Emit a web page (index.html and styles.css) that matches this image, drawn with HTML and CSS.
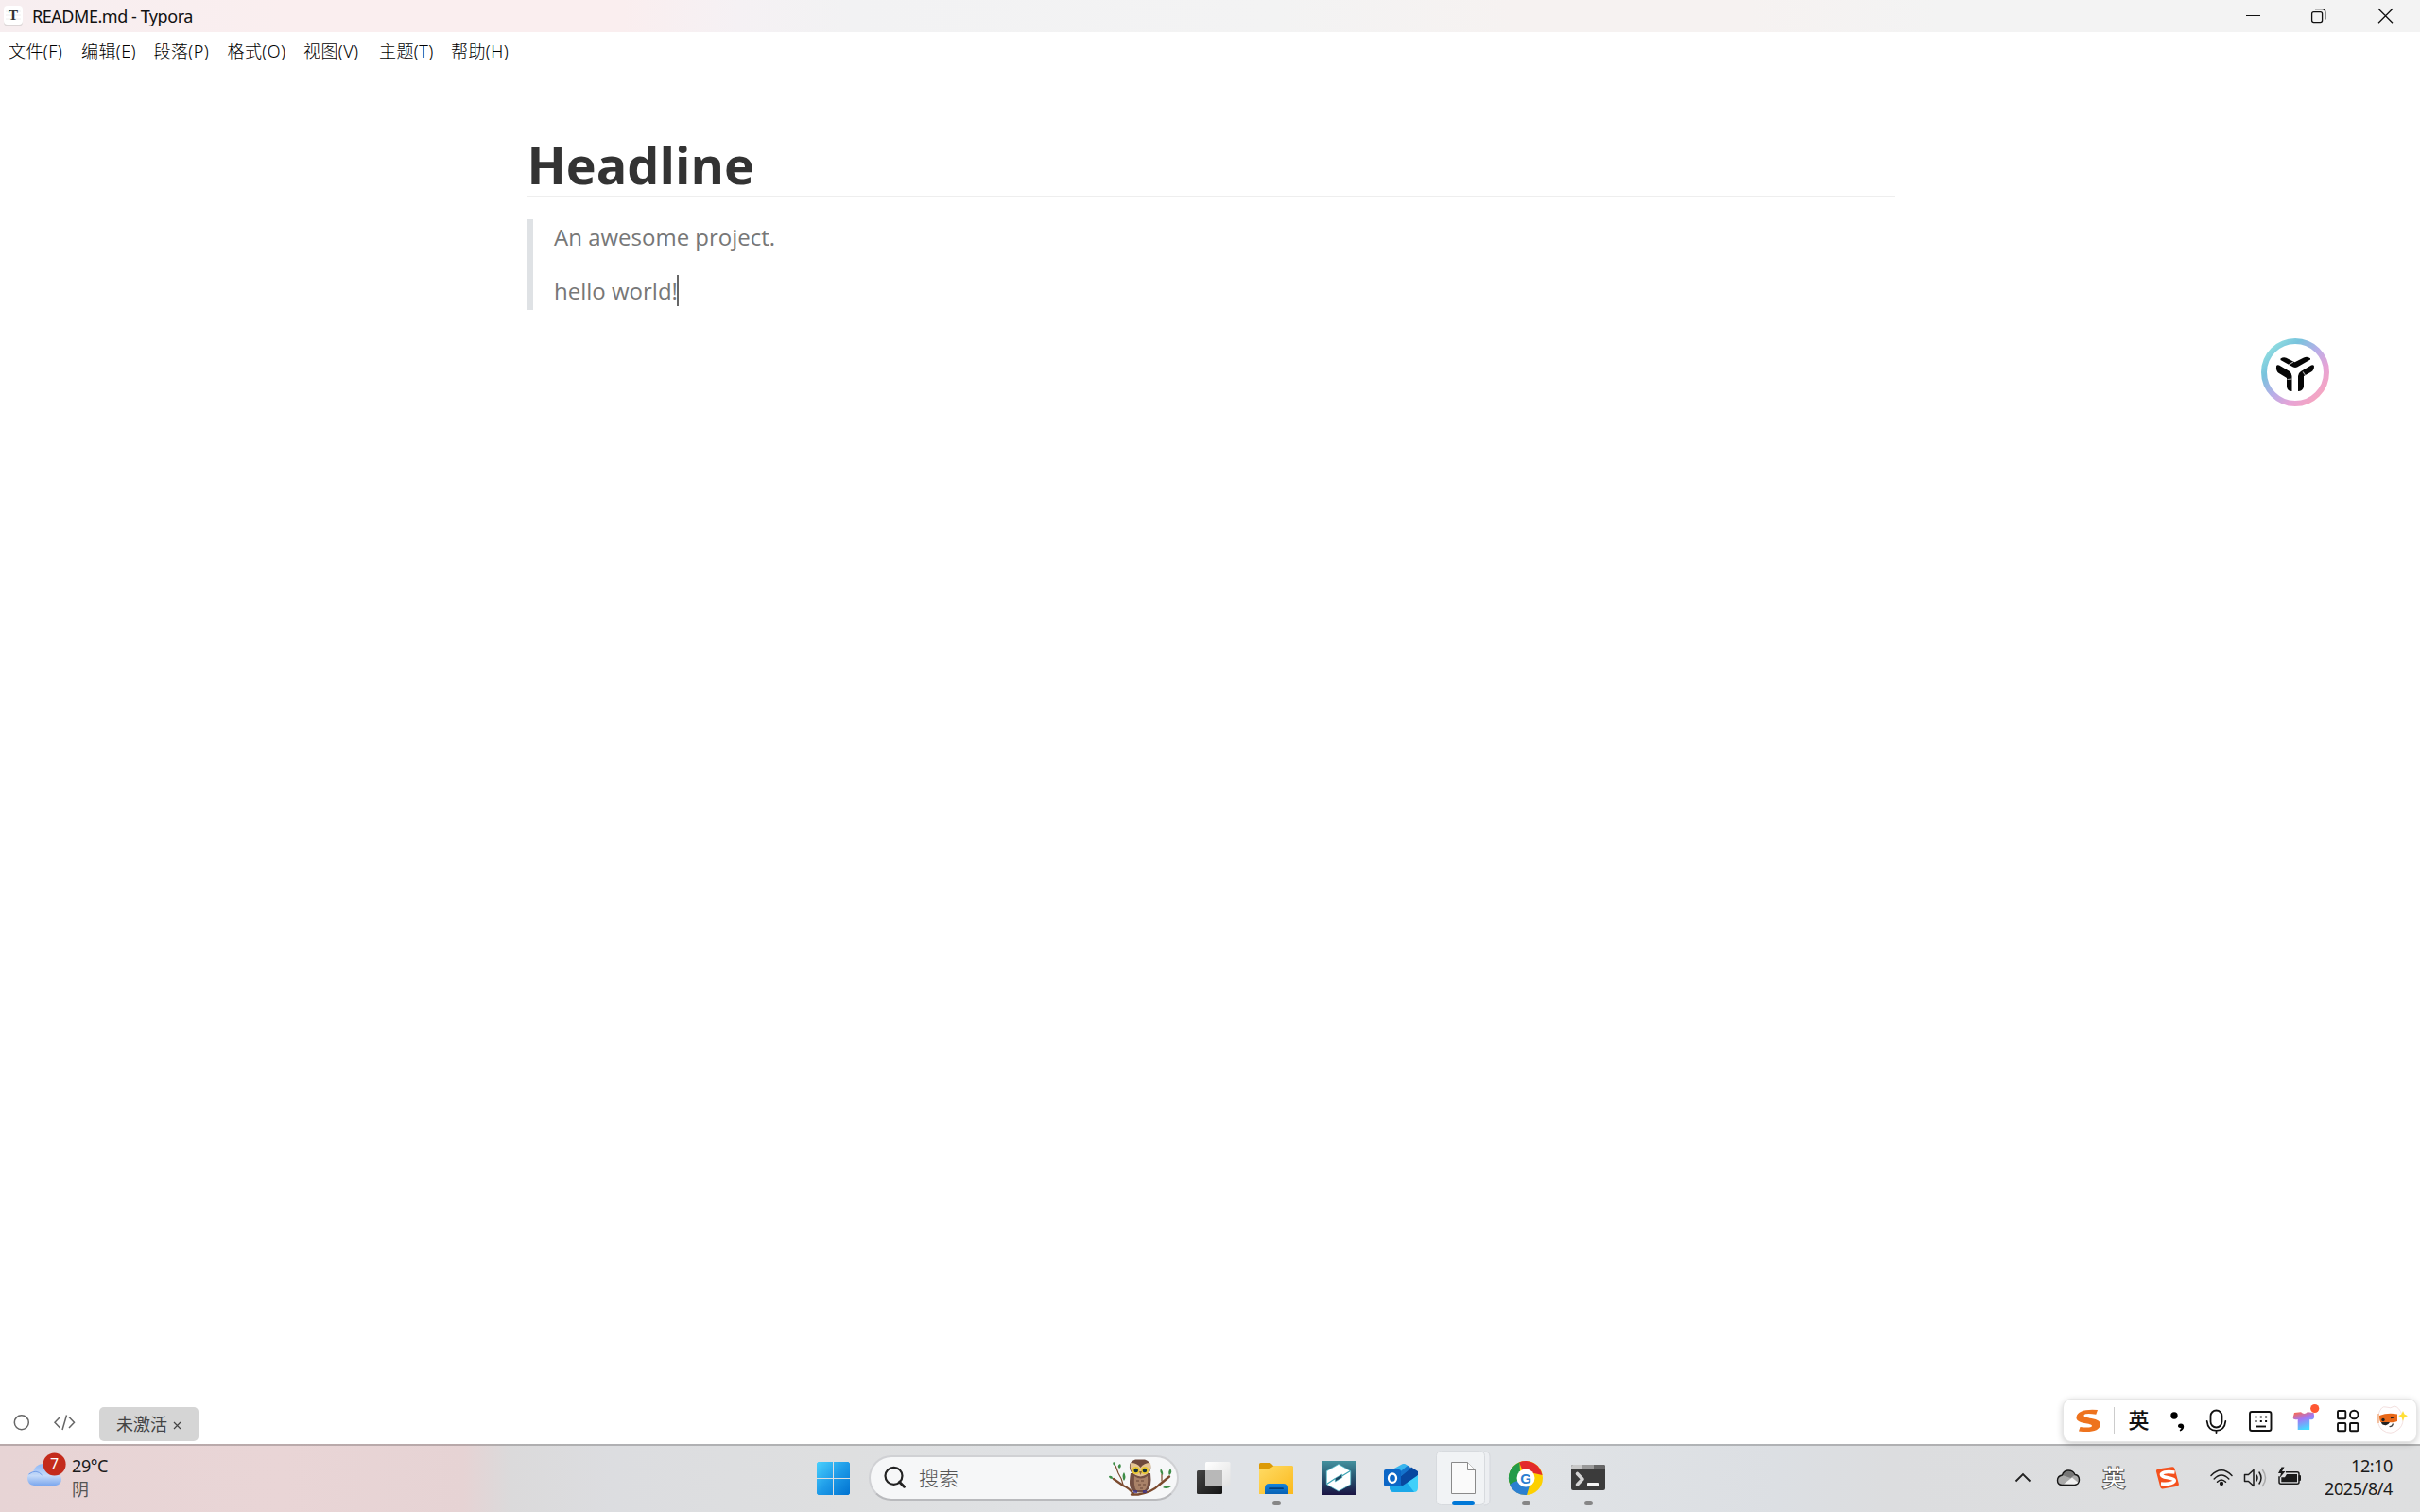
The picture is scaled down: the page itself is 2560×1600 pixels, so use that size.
FILE: index.html
```html
<!DOCTYPE html>
<html lang="zh-CN">
<head>
<meta charset="utf-8">
<title>README.md - Typora</title>
<link rel="stylesheet" href="styles.css">
</head>
<body>
<div class="screen">
  <header class="titlebar">
    <svg class="app-icon" width="22" height="24" viewBox="0 0 22 24">
      <rect x="1" y="2.5" width="20" height="20" rx="4" fill="#dcd6d7"/>
      <rect x="1" y="1" width="20" height="20" rx="4" fill="#fff"/>
      <path d="M3 7h16M3 11h16M3 15h16" stroke="#eee" stroke-width="1"/>
      <text x="11" y="16" text-anchor="middle" class="app-letter">T</text>
    </svg>
    <span class="title">README.md - Typora</span>
    <div class="window-buttons">
      <svg width="70" height="34" viewBox="0 0 70 34"><path d="M28 16.5h15" stroke="#111" fill="none"/></svg>
      <svg width="70" height="34" viewBox="0 0 70 34"><g fill="none" stroke="#111" stroke-width="1.3"><rect x="27.6" y="12.6" width="11" height="11" rx="2"/><path d="M31 9.7h7.500q3.300 0 3.300 3.300v7.500"/></g></svg>
      <svg width="72" height="34" viewBox="0 0 72 34"><path d="M28 9.200l15 15M43 9.200l-15 15" stroke="#111" stroke-width="1.300"/></svg>
    </div>
  </header>

  <nav class="menu">
    <span>文件(F)</span><span>编辑(E)</span><span>段落(P)</span><span>格式(O)</span><span>视图(V)</span><span>主题(T)</span><span>帮助(H)</span>
  </nav>

  <main class="editor">
    <article class="document">
      <h1>Headline</h1>
      <blockquote>
        <p>An awesome project.</p>
        <p>hello world!<span class="caret"></span></p>
      </blockquote>
    </article>
  </main>

  <footer class="status">
    <svg width="105" height="44" viewBox="0 1484 105 44" fill="none" stroke="#666" stroke-width="1.500">
      <circle cx="22.800" cy="1505.200" r="7.500"/>
      <path d="M63.500 1499.500l-5.500 5.700 5.500 5.700M73 1499.500l5.500 5.700-5.500 5.700M70.500 1497.500l-4.500 15.500"/>
    </svg>
    <div class="license">未激活<svg width="9" height="9" viewBox="0 0 9 9"><path d="M1 1l7 7M8 1l-7 7" stroke="#444" stroke-width="1.200"/></svg></div>
  </footer>

  <footer class="taskbar">
    <section class="weather">
      <svg width="48" height="70" viewBox="24 1530 48 70">
        <defs>
          <linearGradient id="cloud" x1="0" y1="0" x2="0" y2="1"><stop offset="0" stop-color="#8db7f6"/><stop offset=".55" stop-color="#c5daf8"/><stop offset="1" stop-color="#7ba7ee"/></linearGradient>
        </defs>
        <path d="M36 1572q-7-1-7-8 0-6 6-6.500 2-8 10.500-8.500 9 0 11 9 8 0 8.500 7 0 6-6 7z" fill="url(#cloud)"/>
        <path d="M30.500 1560q8-6 14 1" fill="none" stroke="#769fe7" stroke-width="1"/>
        <circle cx="57.600" cy="1549.500" r="12" fill="#c42b1c"/>
        <text x="57.600" y="1555.300" text-anchor="middle" class="badge">7</text>
      </svg>
      <div class="weather-text"><span>29°C</span><span class="sky">阴</span></div>
    </section>

    <section class="apps">
      <svg width="66" height="70" viewBox="848 1530 66 70">
        <defs><linearGradient id="win" x1="0" y1="0" x2="1" y2="1"><stop offset="0" stop-color="#49d0fd"/><stop offset=".5" stop-color="#1e9be8"/><stop offset="1" stop-color="#0072d0"/></linearGradient></defs>
        <path d="M865.500 1547H881v17h-17v-15.500zM882 1547h15.500l1.500 1.500V1564h-17zM864 1565h17v17h-15.500l-1.500-1.500zM882 1565h17v15.500l-1.500 1.500H882z" fill="url(#win)"/>
      </svg>

      <div class="search">
        <svg width="24" height="26" viewBox="0 0 24 26"><circle cx="10.500" cy="10.800" r="9" fill="none" stroke="#222" stroke-width="2.200"/><path d="M16.500 17.200l5 5" stroke="#222" stroke-width="3" stroke-linecap="round"/></svg>
        <span>搜索</span>
        <svg class="owl" width="68" height="40" viewBox="1171 1545 68 40">
          <g fill="none" stroke="#7b4a2e" stroke-linecap="round">
            <path d="M1195 1582.500h7q14-2 22-10l11-9" stroke-width="2.400"/>
            <path d="M1197 1582q-4-6-11-9l-10-7" stroke-width="2.400"/>
            <path d="M1186 1572q-1-6-5-12l-3-8M1227 1568v-7" stroke-width="1.200"/>
          </g>
          <g fill="#3d8c46">
            <path d="M1177 1552q-3-2-1-4 3 1 1 4zM1182 1555q-3-3 1-5 2 3-1 5zM1187 1568q-3-5 0-9 3 5 0 9zM1175 1566q-4 0-4-3 4-1 4 3zM1228 1562q-4-3-2-7 3 4 2 7zM1235 1562q-2-3 1-7 3 4-1 7zM1228 1575q4-3.500 9-1-5 3.500-9 1z"/>
          </g>
          <path d="M1194 1560q-3 17 3 19 7 3 14 0 6-4 4-19z" fill="#745043"/>
          <path d="M1198 1563q7 5 14 0 1 12-3 15h-9q-3-4-2-15z" fill="#a98268"/>
          <path d="M1200 1568h3m2 0h3m-6 4h3m2 0h3m-6 4h3" stroke="#684638" stroke-width="1"/>
          <path d="M1193 1551q1-4 6-5.500h10q5 1.500 6 5.500 2 11-10.500 12.500Q1192 1562 1193 1551z" fill="#6f493c"/>
          <path d="M1194 1549q7 0 10.500 5 3.500-5 10.500-5 1 6-1 9-3 4.500-9.500 5.500-6.500-1-9.500-5.500-2-3-1-9z" fill="#e3c394"/>
          <g fill="#e9c832"><circle cx="1199.500" cy="1557" r="4"/><circle cx="1209" cy="1557" r="4"/></g>
          <g fill="#15313c"><circle cx="1199.700" cy="1557" r="2.300"/><circle cx="1208.900" cy="1557" r="2.300"/></g>
          <path d="M1203 1558h3l-1.500 4z" fill="#8b6735"/>
          <path d="M1198 1578v3m2-3v3m8-3v3m2-3v3" stroke="#3b3188" stroke-width="1.500"/>
        </svg>
      </div>

      <svg width="66" height="70" viewBox="1251 1530 66 70">
        <defs><linearGradient id="tv" x1="0" y1="0" x2="1" y2="1"><stop offset="0" stop-color="#444"/><stop offset="1" stop-color="#151515"/></linearGradient><linearGradient id="tw" x1="0" y1="0" x2="1" y2="1"><stop offset="0" stop-color="#fff"/><stop offset="1" stop-color="#e2e2e2"/></linearGradient></defs>
        <rect x="1266" y="1556" width="27" height="25" rx="1.500" fill="url(#tv)"/>
        <rect x="1275" y="1547" width="26.500" height="25" rx="1.500" fill="url(#tw)"/>
        <path d="M1275 1556h18v16h-18z" fill="#b8b8b8"/>
      </svg>

      <svg width="66" height="70" viewBox="1317 1530 66 70">
        <defs><linearGradient id="fold" x1="0" y1="0" x2="1" y2="1"><stop offset="0" stop-color="#ffdc66"/><stop offset="1" stop-color="#fbb91c"/></linearGradient><linearGradient id="blue" x1="0" y1="0" x2="0" y2="1"><stop offset="0" stop-color="#1383dc"/><stop offset="1" stop-color="#0862b5"/></linearGradient></defs>
        <path d="M1332 1549.500q0-1.500 1.500-1.500h9.500q1 0 2 1l2.500 2.500h19q1.500 0 1.500 1.500v6h-36z" fill="#dc9a06"/>
        <path d="M1332 1554h10q2 0 4-1.700 1-1.300 3-1.300h17.500q1.500 0 1.500 1.500V1581h-36z" fill="url(#fold)"/>
        <path d="M1338 1581v-6.500q0-4.500 4.500-4.500h15q4.500 0 4.500 4.500v6.500z" fill="url(#blue)"/>
        <path d="M1343 1575.200h14" stroke="#063f78" stroke-width="1.800" stroke-linecap="round"/>
        <rect x="1346" y="1588" width="9" height="5" rx="2.500" fill="#868686"/>
      </svg>

      <svg width="66" height="70" viewBox="1383 1530 66 70">
        <defs><linearGradient id="hex" x1="0" y1="0" x2="0" y2="1"><stop offset="0" stop-color="#43919e"/><stop offset=".5" stop-color="#27546f"/><stop offset="1" stop-color="#1b1444"/></linearGradient></defs>
        <path d="M1398 1546h36v36h-36z" fill="url(#hex)"/>
        <path d="M1416 1549.500l12.700 7.200v14l-12.700 7.300-12.700-7.300v-14z" fill="#fff" stroke="#55c5d2" stroke-width=".700"/>
        <path d="M1403.500 1570.500l9-6M1419.500 1562l9-5.500" stroke="#3aa3b4" stroke-width="1.200"/>
        <path d="M1412.300 1564.300l7.400-4.300v3.700l-7.400 4.300z" fill="#1f4760" stroke="#55c5d2" stroke-width=".600"/>
      </svg>

      <svg width="66" height="70" viewBox="1449 1530 66 70">
        <path d="M1470 1559.500l13-9.500q2-1.500 4 0l12 8.500V1574h-29z" fill="#168ddd"/>
        <path d="M1472 1555.500l11-6q2-1 4 0l4 2.500-14 12h-5z" fill="#38b5ee"/>
        <path d="M1500 1561v13.500q0 4.500-4.500 4.500H1475q-5 0-5-5l18-5z" fill="#3ed0fa"/>
        <path d="M1470 1570l17-3 9 12h-21q-5 0-5-5z" fill="#1ba8e9"/>
        <path d="M1482 1562l11-9.500 7 4.500v4l-16 11-8-1z" fill="#0848a0"/>
        <path d="M1478 1560l11-9 4 2.500-14 11z" fill="#1473cc"/>
        <rect x="1464" y="1555" width="18" height="18" rx="2" fill="#0c66c6"/>
        <ellipse cx="1473" cy="1564.200" rx="4" ry="4.700" fill="none" stroke="#fff" stroke-width="2.300"/>
      </svg>

      <svg width="66" height="70" viewBox="1515 1530 66 70">
        <path d="M1570 1536q6 0 6 5v46q0 6-6 6" fill="#eceef1" stroke="#d4d7dc"/>
        <rect x="1519.500" y="1535.500" width="51" height="57" rx="5" fill="#f1f3f5" stroke="#d7dade"/>
        <path d="M1535.500 1547.500h17l8 8v25h-25z" fill="#fafafa" stroke="#8a8a8a"/>
        <path d="M1552.500 1547.500v8h8" fill="#fff" stroke="#8a8a8a"/>
        <rect x="1536" y="1588" width="24" height="5" rx="2.500" fill="#0078d7"/>
      </svg>

      <svg width="66" height="70" viewBox="1581 1530 66 70">
        <circle cx="1614" cy="1564" r="18" fill="#fdd000"/>
        <path d="M1614 1564L1607 1547.400A18 18 0 0 1 1631.500 1561L1614 1557z" fill="#e32b2b"/>
        <path d="M1614 1564L1597.500 1571.500A18 18 0 0 1 1607.500 1547.200L1608 1558z" fill="#249b49"/>
        <path d="M1606 1566l12 6-3 10a18 18 0 0 1-18-11z" fill="#2b80d1"/>
        <path d="M1606 1567l-9.500 1.500A18 18 0 0 1 1599 1554z" fill="#249b49"/>
        <circle cx="1614" cy="1564" r="9.500" fill="#fff"/>
        <text x="1614" y="1569.500" text-anchor="middle" class="chrome-g">G</text>
        <rect x="1610" y="1588" width="9" height="5" rx="2.500" fill="#868686"/>
      </svg>

      <svg width="66" height="70" viewBox="1647 1530 66 70">
        <rect x="1662" y="1550" width="36" height="27" rx="2" fill="#3b3b3b"/>
        <path d="M1664 1550h10v5h-12v-3q0-2 2-2z" fill="#c8c8c8"/><path d="M1674 1550h12v5h-12z" fill="#999"/><path d="M1686 1550h10q2 0 2 2v3h-12z" fill="#676767"/>
        <path d="M1668.500 1559.500l5.500 5.800-5.500 5.800" fill="none" stroke="#d4d4d4" stroke-width="3.600" stroke-linecap="round" stroke-linejoin="round"/>
        <rect x="1679" y="1569" width="12" height="4" rx=".800" fill="#f4f4f4"/>
        <rect x="1676" y="1588" width="9" height="5" rx="2.500" fill="#868686"/>
      </svg>
    </section>

    <section class="tray">
      <svg width="40" height="70" viewBox="2120 1530 40 70"><path d="M2132.500 1567.500l7.500-7.500 7.500 7.500" fill="none" stroke="#222" stroke-width="1.800"/></svg>
      <svg width="52" height="70" viewBox="2160 1530 52 70">
        <path d="M2181 1571.500q-4.500-.500-4.500-5t5-5.500q1.500-5 6.500-5 5 0 7 4.500 4.500.500 4.500 5.500 0 5-5 5.500z" fill="#aaa"/>
        <path d="M2183 1570.500l9-7 6.500 5.500q-1.500 2-4 2z" fill="#f1f1f1"/>
        <path d="M2181.500 1561q2-4.500 6.500-4.500 4 0 6.500 4.500l-4 3z" fill="#777"/>
        <path d="M2181 1571.500q-4.500-.500-4.500-5t5-5.500q1.500-5 6.500-5 5 0 7 4.500 4.500.500 4.500 5.500 0 5-5 5.500z" fill="none" stroke="#161616" stroke-width="1.400"/>
      </svg>
      <svg width="48" height="70" viewBox="2212 1530 48 70"><text x="2236" y="1573" text-anchor="middle" class="ime-outline">英</text></svg>
      <svg width="66" height="70" viewBox="2260 1530 66 70">
        <path d="M2283 1554.500l15-2.300q2-.200 2.500 1.800l4.300 16q.500 2-1.500 2.700l-15.500 2.800q-2 .300-2.500-1.700l-4.300-16.500q-.500-2 2-2.800z" fill="#f4511d"/>
        <path d="M2300.500 1558q-12-1.500-14 2-.500 2.500 6 3.500 9 1.500 7.500 4-3 3.500-14 2.500" fill="none" stroke="#fff" stroke-width="3.600"/>
      </svg>
      <svg width="42" height="70" viewBox="2326 1530 42 70" fill="none" stroke="#1b1b1b" stroke-width="1.500" stroke-linecap="round">
        <path d="M2339 1561.500q11-11.500 22 0M2342.200 1565q7.800-8 15.600 0M2345.500 1568.200q4.500-4.500 9 0"/><circle cx="2350" cy="1570" r="1.400" fill="#1b1b1b"/>
      </svg>
      <svg width="36" height="70" viewBox="2368 1530 36 70" fill="none" stroke="#1b1b1b" stroke-width="1.500" stroke-linecap="round" stroke-linejoin="round">
        <path d="M2374.500 1560.500h4l5.500-5v17l-5.500-5h-4zM2387 1561q2 3 0 6M2390 1558q4 6 0 12"/><path d="M2393.500 1555.500q6 8.500 0 17" stroke="#aaa"/>
      </svg>
      <svg width="42" height="70" viewBox="2404 1530 42 70">
        <path d="M2418 1557.700h12q2 0 2 2v8.600q0 2-2 2h-17q-2 0-2-2v-6" fill="none" stroke="#1b1b1b" stroke-width="1.500"/>
        <path d="M2419 1560h11v8.300h-16.700v-5h3.700z" fill="#1b1b1b"/><rect x="2431.500" y="1561" width="2.500" height="6" rx="1" fill="#1b1b1b"/>
        <path d="M2413.500 1552.500l-3.500 6.500h3l-1.500 5 6-7h-3.500l2.500-4.500z" fill="#1b1b1b"/>
      </svg>
      <div class="clock"><span>12:10</span><span>2025/8/4</span></div>
    </section>
  </footer>

  <aside class="assistant">
    <svg width="72" height="72" viewBox="0 0 72 72">
      <defs><linearGradient id="ring" x1=".1" y1=".1" x2=".9" y2=".9"><stop offset="0" stop-color="#8fdde0"/><stop offset=".22" stop-color="#78c3dd"/><stop offset=".5" stop-color="#b9aee8"/><stop offset=".75" stop-color="#e6a3d6"/><stop offset="1" stop-color="#f6a6c0"/></linearGradient></defs>
      <circle cx="36" cy="36" r="33" fill="#fff" stroke="url(#ring)" stroke-width="6"/>
      <path d="M20.500 21.500q3-2 6-.8l9 4.600 9.500-4.900q4-1.700 7 .9v1.200L38 30.500q-2 .8-4 0L20.500 23zM16 29.500q.700-2 3-1l11 6.500q2.500 2 2.500 5v16q-4.500 0-5.500-4.500V42l-9-5.500q-2.500-2.500-2-7zM56 29.500q-.700-2-3-1L42 35q-3 2-3 5v16q4.500 0 6-4.500V40l8-4.500q3-2 3-6z" fill="#050505"/>
      <path d="M29 28l5-3M27.500 43.500l5.500-.500M44 35.500l2.500 3.500" stroke="#aaa" stroke-width="1.200"/>
    </svg>
  </aside>

  <aside class="ime">
    <svg width="54" height="44" viewBox="2183 1481 54 44">
      <path d="M2219 1492l-1.700 4.800q-11-1.800-12.800.7c-.500 2 3 2.600 8 3.500q10 1.500 9.500 6.500-1.500 9.500-23 7l1.500-4.500q11 1.500 12.500-.8c.500-2-4-2.500-8-3.300-6-1.200-9-3-8.500-6.500q2-9 22.500-7.400z" fill="#ee731e"/>
      <path d="M2236.500 1489v28" stroke="#ccc"/>
    </svg>
    <span class="ime-mode">英</span>
    <svg width="34" height="44" viewBox="2288 1481 34 44"><circle cx="2300" cy="1498" r="3.700"/><path d="M2307 1506.500a3.200 3.200 0 0 1 3.200 3q0 3.500-4 5l-.500-1 1.800-2.200q-3.500-.300-3.500-2.300 0-2.500 3-2.500z"/></svg>
    <svg width="46" height="44" viewBox="2322 1481 46 44" fill="none" stroke="#111" stroke-width="1.800" stroke-linecap="round"><rect x="2338.500" y="1492.500" width="12" height="18" rx="6"/><path d="M2334.700 1504q1 9.800 9.800 9.800t9.800-9.800M2344.500 1514v2"/></svg>
    <svg width="46" height="44" viewBox="2368 1481 46 44" fill="none" stroke="#111" stroke-width="1.900"><rect x="2380" y="1494" width="22.500" height="20" rx="2"/><path d="M2385.500 1499.500h13M2385.500 1504h13" stroke-dasharray="2 3.300"/><path d="M2386 1509.500h11"/></svg>
    <svg width="48" height="44" viewBox="2414 1481 48 44">
      <defs><linearGradient id="shirt" x1=".1" y1="0" x2=".5" y2="1"><stop offset="0" stop-color="#ff6848"/><stop offset=".45" stop-color="#a178f5"/><stop offset="1" stop-color="#43dcff"/></linearGradient></defs>
      <path d="M2427 1495l7-.800q3.500 3.500 7 0l6.500.800q1.500 6-1 7-2 .700-3.300 0V1513h-12.500V1502q-5 1-5-2z" fill="url(#shirt)"/><circle cx="2448.700" cy="1490.500" r="4.600" fill="#ff5733"/>
    </svg>
    <svg width="44" height="44" viewBox="2462 1481 44 44" fill="none" stroke="#111" stroke-width="1.900"><rect x="2473" y="1493" width="8.300" height="8.300" rx="1"/><circle cx="2490.300" cy="1497" r="4.300"/><rect x="2473" y="1506" width="8.300" height="8.300" rx="1"/><rect x="2486" y="1506" width="8.300" height="8.300" rx="1"/></svg>
    <svg width="49" height="44" viewBox="2506 1481 49 44">
      <path d="M2516 1497q3-10 8-8 5 2 9-1 5 1 8 9 3 9-3 15-9 8-18 1-6-5-4-16z" fill="#fffefe" stroke="#f3e0df"/>
      <path d="M2517 1498q9-3.500 19-1.500v7.500q-2 1-5 1.200h-12q-2-.200-2-7.200z" fill="#e86818"/>
      <path d="M2516 1496v10" stroke="#f09454"/>
      <path d="M2519 1505h9q-2 4-5.500 3-3 0-3.500-3z" fill="#222"/><circle cx="2521" cy="1502.500" r="1.700" fill="#222"/><path d="M2529 1500.500l4-.800" stroke="#222" stroke-width="1.600"/><path d="M2527.500 1509.500q3 .500 4-3" fill="none" stroke="#444" stroke-width="1.200"/>
      <path d="M2542 1493l1.500 3.500 3.500 1.700-3.500 1.500-1.500 4-1.500-4-3.300-1.500 3.300-1.700z" fill="#ffdf35"/>
    </svg>
  </aside>
</div>
</body>
</html>
```
FILE: styles.css
```css
* { box-sizing: border-box; }
body { margin: 0; background: #fff; color: #1b1b1b; font-family: "Noto Sans", "Noto Sans CJK SC", sans-serif; }
svg { display: block; flex: none; }

.screen { position: relative; width: 2560px; height: 1600px; display: flex; flex-direction: column; overflow: hidden; background: #fff; }

.titlebar { height: 34px; flex: none; display: flex; align-items: center; padding-left: 3px;
  background: linear-gradient(90deg, #f7eef0 0, #faeeef 300px, #faeeef 660px, #f5f1f4 780px, #f2f2f3 900px, #f3f3f3 1350px, #f6f2f1 1600px, #f6f2f1 1850px, #f3f3f3 2050px, #f3f3f3 100%); }
.app-letter { font: bold 15px "Liberation Serif", serif; fill: #333; }
.title { margin-left: 9px; font-size: 18px; letter-spacing: -0.45px; line-height: 34px; color: #111; }
.window-buttons { margin-left: auto; display: flex; }

.menu { flex: none; height: 42px; padding-left: 9px; display: grid; grid-template-columns: 77px 76.500px 78px 80.500px 80px 76px 80px; align-items: start; font-size: 18px; font-weight: 300; line-height: 41px; letter-spacing: 0.400px; color: #000; white-space: nowrap; }

.editor { flex: 1; padding: 66px 555px 0 558px; }
.document { font-family: "Open Sans", sans-serif; font-size: 24px; line-height: 38.400px; color: #333; }
.document h1 { margin: 0 0 24px; font-size: 54px; line-height: 65px; font-weight: 700; border-bottom: 1px solid #eee; text-indent: -0.500px; }
.document blockquote { margin: 0; padding-left: 22px; border-left: 6px solid #dfe2e5; color: #777; }
.document p { margin: 0 0 19px; line-height: 38.500px; }
.document p:last-child { margin-bottom: 0; height: 38.500px; line-height: 36px; }
.caret { position: absolute; width: 2px; height: 33px; margin: 1px 0 0 -1px; background: #666; }

.status { flex: none; height: 44px; display: flex; align-items: flex-start; }
.license { width: 105px; height: 36px; margin-top: 5px; display: flex; align-items: center; justify-content: center; gap: 6px; border-radius: 5px; background: #d5d5d5; color: #444; font-size: 18px; line-height: 34px; padding-bottom: 1px; }
.license svg { margin-top: 3px; }

.taskbar { flex: none; height: 72px; border-top: 2px solid rgba(0, 0, 0, .2); display: grid; grid-template-columns: 848px auto 1fr;
  background: linear-gradient(90deg, #e7d4d5 0, #e9d5d6 300px, #e6d3d4 490px, #dbdadb 540px, #dcdde0 650px, #dedfe0 900px, #e0e3e7 1300px, #e0e3e6 1600px, #dcdfe3 1880px, #dcdddf 2000px, #dedfe0 100%); background-origin: border-box; }
.weather { display: flex; padding-left: 24px; }
.weather-text { display: flex; flex-direction: column; padding: 9px 0 0 4px; font-size: 18px; line-height: 24px; letter-spacing: -0.400px; }
.sky { color: #555; font-size: 18px; line-height: 26px; }
.badge { font: 16px "Noto Sans", sans-serif; fill: #fff; }
.apps { display: flex; }
.search { width: 328px; height: 48px; margin: 10px 4px 0 5px; padding: 0 4px 0 15px; display: flex; align-items: center; border: 2px solid #d0d1d4; border-bottom-color: #b9babd; border-radius: 24px; background: #f6f7f8; color: #555; font-size: 21px; font-weight: 300; }
.search span { margin-left: 13px; line-height: 44px; }
.search svg:first-child { margin-left: -1px; }
.owl { margin-left: auto; }
.chrome-g { font: bold 15px "Liberation Sans", sans-serif; fill: #2b80d1; }
.tray { display: flex; justify-content: flex-end; padding-right: 29px; }
.ime-outline { font: 24px "Noto Sans CJK SC", sans-serif; fill: #fff; stroke: #555; stroke-width: 2px; paint-order: stroke; }
.clock { width: 85px; padding-top: 9px; display: flex; flex-direction: column; align-items: flex-end; font-size: 18px; line-height: 24px; letter-spacing: -0.400px; }

.assistant { position: absolute; left: 2392px; top: 358px; }
.ime { position: absolute; left: 2182px; top: 1480px; width: 375px; height: 46px; display: flex; border: 1px solid #e6e6e6; border-radius: 9px; background: #fff; box-shadow: 0 2px 7px rgba(0, 0, 0, .2); }
.ime-mode { width: 51px; text-align: center; font-size: 22px; line-height: 43px; font-weight: 500; color: #111; }
```
